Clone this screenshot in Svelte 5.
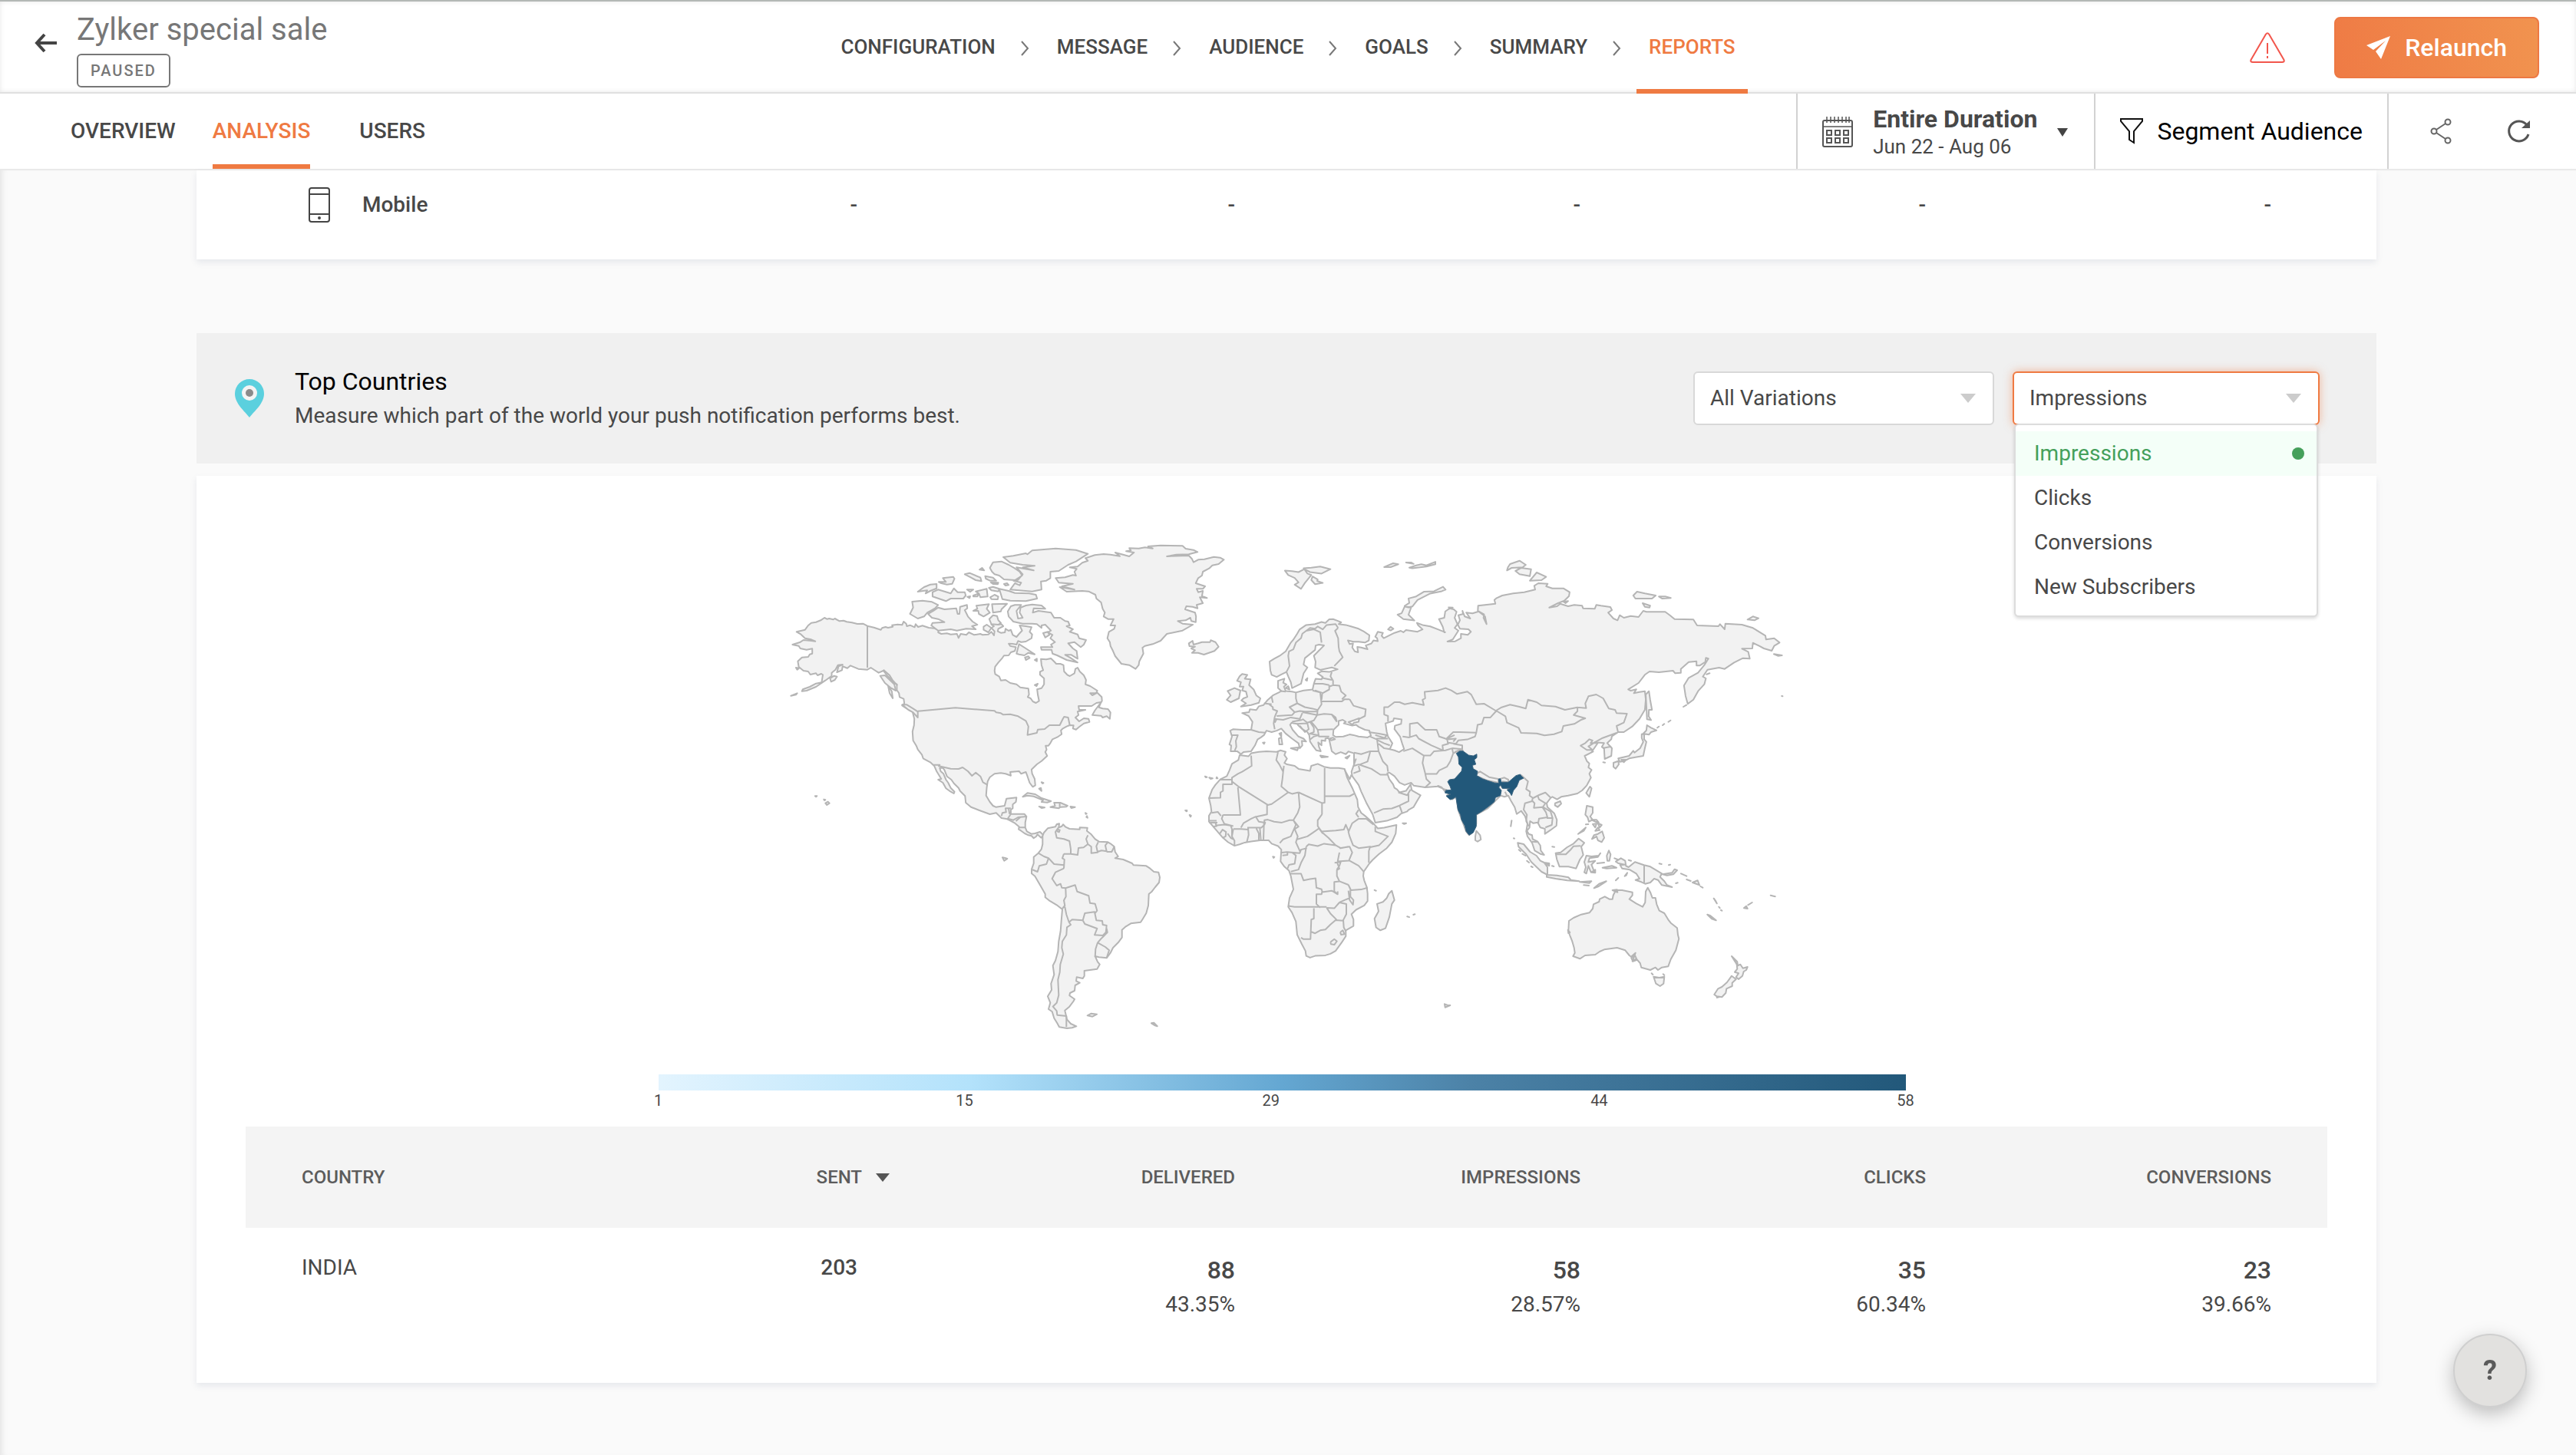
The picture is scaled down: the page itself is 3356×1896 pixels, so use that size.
<script lang="ts">
	type Tile = 'na' | 'eu' | 'as' | 'sa' | 'oc';
	type Part = [Tile, string];

	const steps = ['Configuration', 'Message', 'Audience', 'Goals', 'Summary', 'Reports'];
	const tabs = ['Overview', 'Analysis', 'Users'];
	const variations = ['All Variations'];
	const metrics = ['Impressions', 'Clicks', 'Conversions', 'New Subscribers'];
	const legend = [1, 15, 29, 44, 58];
	const platforms = [{ name: 'Mobile', values: ['-', '-', '-', '-', '-'] }];
	const countries = [
		{
			name: 'INDIA',
			sent: 203,
			stats: [
				{ count: 88, rate: '43.35%' },
				{ count: 58, rate: '28.57%' },
				{ count: 35, rate: '60.34%' },
				{ count: 23, rate: '39.66%' }
			]
		}
	];

	let variation = $state('All Variations');
	let metric = $state('Impressions');
	let menuOpen = $state(true);

	function choose(m: string) {
		metric = m;
		menuOpen = false;
	}

	// Shapes are stored per map tile: origin x, origin y, units per pixel in x and y
	const tiles: Record<Tile, number[]> = {
		na: [152, 70, 2.45, 3],
		eu: [682, 70, 3, 2.6133],
		as: [842, 70, 2.45, 3],
		sa: [422, 390, 3, 3],
		oc: [1002, 320, 3, 3]
	};

	function line(...parts: Part[]) {
		const out: string[] = [];
		for (const [tile, text] of parts) {
			const [ox, oy, sx, sy] = tiles[tile];
			for (const p of text.trim().split(/\s*,\s*/)) {
				const [x, y] = p.split(' ').map(Number);
				out.push(`${(ox + x / sx).toFixed(1)} ${(oy + y / sy).toFixed(1)}`);
			}
		}
		return 'M' + out.join('L');
	}
	const rings = (tile: Tile, list: string[]) => list.map((t) => line([tile, t]) + 'Z').join('');
	const lines = (tile: Tile, list: string[]) => list.map((t) => line([tile, t])).join('');

	const northAmerica = rings('na', [
		'157 345,165 350,172 348,185 352,190 348,205 358,218 356,228 361,245 364,262 369,280 368,294 377,315 383,337 392,341 385,352 381,360 384,375 380,373 374,390 371,405 373,410 360,418 368,420 378,430 374,445 382,448 370,456 381,470 376,490 384,508 386,522 392,520 402,530 408,548 406,560 410,580 408,585 424,592 408,610 412,618 402,635 412,655 408,662 412,680 410,690 400,698 414,700 398,690 385,698 378,690 372,706 366,712 372,722 370,728 378,712 388,710 398,720 404,733 402,735 388,745 396,752 392,758 412,770 420,778 408,788 395,780 375,800 378,818 382,812 400,820 410,818 425,800 438,785 440,775 436,770 450,758 447,745 446,750 455,768 460,765 475,752 480,745 492,730 493,725 502,712 520,702 536,700 552,702 565,715 575,720 590,735 588,750 600,770 605,782 617,808 622,810 645,806 655,815 660,822 672,832 678,842 670,838 645,836 625,850 620,858 605,858 582,845 568,845 556,855 550,850 530,848 506,865 508,880 504,890 516,897 525,910 525,920 530,922 555,932 568,940 573,955 562,958 545,965 540,972 555,985 570,992 588,990 605,1005 612,1028 630,1024 640,1005 640,1012 648,1028 638,1042 655,1043 670,1040 675,1025 678,1010 690,985 690,968 690,970 705,990 705,965 712,968 725,958 735,970 750,985 738,1000 740,1003 752,985 758,970 772,960 782,950 778,952 766,940 765,930 770,918 778,912 785,914 800,900 812,885 820,878 835,872 845,863 845,866 860,862 870,868 885,850 905,835 918,818 938,820 955,828 975,830 1000,822 1006,812 990,805 965,800 948,785 955,778 945,750 948,752 962,735 955,720 952,700 955,685 968,678 985,675 1010,673 1040,685 1065,695 1080,704 1085,720 1082,732 1080,738 1052,770 1048,768 1065,758 1075,758 1090,752 1095,752 1112,765 1112,795 1112,802 1122,798 1145,798 1165,803 1180,817 1190,829 1188,845 1182,856 1195,849 1205,837 1192,833 1200,825 1207,818 1198,808 1195,796 1188,785 1178,777 1172,778 1162,765 1148,750 1138,740 1132,722 1128,705 1108,685 1113,650 1097,625 1085,608 1068,606 1042,590 1022,585 1010,570 992,562 978,548 965,540 940,535 932,525 932,528 945,537 955,545 978,552 990,560 1010,572 1025,570 1032,560 1025,545 1012,535 990,520 978,530 975,515 945,508 925,495 910,472 895,468 880,455 860,450 845,440 825,438 790,443 765,444 740,438 712,420 700,405 688,412 680,410 662,397 655,395 640,388 628,388 605,378 600,365 580,358 572,345 552,330 560,320 552,305 540,294 548,265 545,240 532,230 542,215 535,213 550,197 558,202 535,215 528,200 530,192 548,180 560,180 572,160 590,130 615,100 630,85 632,88 625,110 615,130 602,148 598,152 568,147 564,135 570,130 562,112 567,105 555,90 552,75 537,72 515,85 500,105 498,110 488,118 485,118 466,100 470,80 465,75 455,55 450,80 440,90 432,115 435,128 437,115 430,95 425,82 410,68 400,95 392,105 375,115 365,130 362,145 355'
	]);

	const arctic = rings('na', [
		'895 190,925 187,950 178,960 180,955 165,962 154,940 148,965 145,980 130,998 122,990 112,1000 108,1020 100,1048 96,1070 98,1100 104,1085 90,1110 98,1130 105,1145 90,1120 85,1135 82,1130 73,1160 74,1180 70,1205 74,1190 66,1230 62,1300 64,1310 75,1335 80,1348 88,1320 97,1280 98,1250 105,1320 102,1330 115,1335 128,1350 118,1370 116,1400 107,1420 110,1432 118,1415 135,1395 140,1385 152,1365 165,1362 180,1350 190,1342 210,1355 215,1372 222,1365 232,1345 232,1350 245,1365 240,1362 260,1378 268,1355 265,1365 288,1345 295,1348 308,1332 302,1312 300,1308 312,1340 325,1343 340,1342 362,1328 358,1325 345,1310 355,1285 358,1300 368,1333 372,1300 395,1250 408,1230 435,1205 448,1180 455,1172 462,1175 485,1162 515,1160 530,1150 545,1130 530,1105 525,1085 495,1078 475,1070 455,1068 440,1060 425,1065 400,1082 388,1085 375,1070 375,1080 350,1062 350,1048 340,1052 325,1045 310,1040 285,1025 270,1022 255,1000 242,980 240,930 243,908 225,955 235,915 222,950 212,905 208',
		'728 108,760 103,800 93,805 97,820 82,895 74,960 80,998 95,960 125,935 138,905 162,878 165,878 190,865 200,848 203,850 235,820 242,750 235,765 210,780 218,785 208,760 200,775 197,790 175,770 148,825 160,790 148,828 142,790 138,750 130',
		'685 150,695 128,722 125,745 138,765 152,780 165,788 180,765 198,730 195,715 180,700 175,692 165',
		'715 232,745 240,765 248,810 250,832 255,836 270,800 280,750 278,725 272',
		'745 340,742 320,752 300,765 295,785 295,770 318,775 348,790 345,780 325,783 305,800 297,820 293,850 297,862 310,825 308,822 325,840 318,880 325,890 345,910 345,925 358,935 360,940 375,930 378,950 390,940 400,965 410,970 425,992 432,985 450,975 460,955 440,935 445,950 465,962 475,965 505,945 490,925 490,940 500,965 520,930 510,900 492,885 485,882 470,850 470,848 460,885 460,880 450,893 440,878 425,885 412,870 402,880 395,862 372,850 375,850 385,835 370,820 368,790 368,760 360',
		'488 330,505 318,520 305,540 312,578 308,582 330,588 330,590 302,612 295,613 308,605 315,615 340,630 360,645 372,628 378,640 390,610 388,580 395,560 390,520 395,498 375,502 365,540 362,520 350,500 345',
		'437 282,470 278,500 283,520 295,510 308,485 325,475 340,455 348,430 330,440 305',
		'632 318,645 310,642 298,682 292,675 310,685 325,665 340,650 330,648 318',
		'692 292,740 290,722 312,720 320,695 325',
		'695 335,708 338,712 355,720 365,712 372,690 370,683 350',
		'502 245,520 235,560 250,570 230,582 245,605 245,608 258,600 270,560 270,545 280,502 262',
		'632 258,650 250,640 242,675 232,678 262,655 265,650 250,645 262,632 262',
		'682 228,695 224,715 232,712 242,690 238',
		'686 265,700 255,712 262,710 273,690 272',
		'455 243,475 225,495 215,515 213,515 230,495 240,480 250,485 238',
		'522 205,545 205,535 190,568 185,572 192,565 212,548 215,530 210',
		'605 175,620 170,655 188,658 202,640 198,625 188',
		'670 182,695 188,705 200,685 200,672 192',
		'688 207,712 208,710 214,695 213',
		'652 157,660 150,667 160',
		'730 213,740 210,745 217,735 219',
		'612 235,632 235,622 244',
		'613 263,622 261,620 268',
		'665 380,675 372,690 385,680 402,665 392',
		'778 448,800 465,828 488,808 482,795 492,778 488,770 485',
		'855 405,870 400,875 412,862 422',
		'797 500,808 496,812 502,800 510',
		'828 510,835 505,835 515',
		'828 608,838 603,834 612'
	]) + rings('na', [
		'1040 675,1033 695,1045 700,1062 702,1070 715,1068 740,1058 730,1045 735,1040 728,1012 725,1020 708',
		'1320 445,1332 435,1335 450,1350 445,1362 440,1388 440,1390 433,1405 440,1415 458,1402 475,1368 489,1350 482,1330 482,1340 472,1328 465,1340 458,1322 456',
		'790 1045,805 1030,830 1035,850 1050,880 1062,868 1067,850 1065,855 1058,825 1043,805 1040',
		'878 1085,893 1080,890 1068,910 1068,933 1080,928 1084,910 1085,905 1090',
		'842 1083,860 1087,850 1089', '942 1083,957 1085,945 1089',
		'160 1070,168 1064,173 1070,165 1077', '127 1042,133 1042,130 1045', '155 1055,160 1057,157 1059',
		'405 685,420 685,440 700,455 712,455 735,440 715,425 705',
		'175 582,188 572,197 575,190 588,178 595', '50 650,70 640,66 646',
		'360 610,372 632,375 660,365 640', '335 572,350 570,380 605,385 630,370 620,350 600',
		'66 540,76 542,70 548', '850 988,856 991,853 993', '842 1013,848 1010,850 1022', '990 1108,994 1111,991 1112', '995 1120,997 1127,993 1124',
		'1372 965,1378 968,1374 969', '1385 970,1396 973,1390 975', '1409 968,1412 973,1408 973', '1310 1098,1314 1101', '1324 1117,1326 1121'
	]);

	const southAmerica = rings('sa', [
		'235 238,240 225,255 208,270 205,285 202,290 192,300 190,298 205,310 200,315 193,325 203,340 210,380 212,380 205,410 206,408 218,425 232,440 250,455 260,490 262,500 268,515 280,518 300,530 318,518 325,550 330,585 345,590 352,640 355,655 365,670 378,688 380,693 400,690 420,675 438,662 455,650 465,648 510,640 540,625 565,618 575,580 580,560 592,545 605,545 635,530 655,510 675,500 695,485 715,455 712,440 708,450 730,458 740,448 758,398 765,398 785,392 795,368 790,366 805,380 812,362 822,360 843,342 852,340 862,360 876,355 885,340 905,322 920,330 955,345 972,367 982,350 988,330 990,300 985,292 970,280 950,272 925,258 915,265 890,255 865,270 840,268 815,280 780,275 745,285 725,295 690,298 650,305 610,308 570,312 525,290 508,260 490,245 478,245 465,225 430,205 395,192 385,192 368,200 345,200 320,218 305,230 290,235 270'
	]) + rings('sa', ['410 940,425 932,447 935,430 944', '660 970,670 968,683 982,672 978', '78 322,88 324,97 327,85 335', '793 138,799 138,797 142', '809 156,815 159,813 163', '293 212,302 215,299 223,292 220', '1135 319,1141 320,1138 324']);

	const eurasia = line(
		['eu', '350 495,345 480,342 450,360 440,385 428,405 415,425 385,435 375,450 355,460 340,485 325,520 322,545 315,560 318,575 306,590 305,605 310,622 316,612 322,640 325,660 330,690 338,712 348,732 360,730 378,715 385,690 382,670 382,648 378,655 390,668 388,665 402,675 415,688 418,685 400,700 402,725 408,718 395,740 388,748 378,765 380,762 370,755 365,765 348,785 352,780 362,788 370,800 365,830 352,855 345,865 350,875 342,920 348,940 340,922 325,918 318,940 325,970 330,1000 340,1028 350'],
		['as', '445 402,440 380,428 350,445 345,448 320,462 308,475 312,484 322,478 345,487 370,478 385,490 395,472 430,455 438,480 437,498 425,498 408,520 412,530 400,522 390,495 388,488 372,495 355,490 335,505 330,503 318,510 340,528 348,515 325,535 328,555 320,572 332,570 345,580 370,575 340,552 318,553 298,608 290,605 275,612 268,630 258,665 250,700 245,735 235,732 220,745 210,775 212,770 222,790 230,825 230,845 245,843 260,828 278,808 288,780 305,805 300,815 290,840 300,860 295,885 298,888 308,925 310,930 295,945 298,975 303,980 315,968 325,985 348,998 355,1005 335,1018 345,1040 338,1065 342,1080 318,1090 322,1150 322,1165 335,1180 350,1240 352,1252 375,1320 378,1325 370,1340 390,1342 368,1395 372,1430 385,1470 415,1472 430,1498 425,1515 442,1498 455,1490 474,1465 465,1450 455,1430 443,1428 465,1395 466,1415 478,1420 505,1398 503,1370 520,1340 545,1322 540,1285 548,1270 575,1280 582,1275 605,1255 632,1240 665,1222 682,1215 650,1210 610,1225 580,1255 560,1275 530,1288 505,1280 502,1278 518,1260 532,1250 532,1250 515,1225 518,1200 545,1200 560,1182 562,1175 552,1130 558,1100 555,1085 568,1065 600,1032 625,1040 630,1058 625,1050 640,1068 635,1085 632,1088 665,1085 705,1068 740,1045 770,1018 792,1000 792,980 808,978 820,965 835,980 855,978 885,957 897,955 855,948 850,955 835,925 832,905 848,918 862,900 862,880 845,895 835,908 820,918 825,912 835,935 835,915 870,920 868,893 885,900 905,908 915,905 930,915 940,908 955,913 970,900 1000,885 1020,870 1032,840 1040,818 1045,805 1055,790 1045'],
		['oc', '480 300,465 320,468 335,495 360,505 385,503 408,480 425,458 440,458 420,440 415,430 395,412 398,400 390,398 415,388 428,395 440,408 445,410 460,430 470,440 485,442 505,455 522,440 518,418 505,408 475,390 450,385 430,390 400,380 370,365 350,348 362,340 335,325 310,315 290,300 295,285 290,265 310,235 340,190 365,190 400,175 435,162 445,150 430,135 390,120 350,112 295,95 305,75 290,90 280,68 275,55 258,40 252'],
		['eu', '1000 875,950 878,905 872,895 862,870 870,850 862,830 840,810 828,802 830,810 850,825 868,830 880,840 885,850 895,875 890,893 868,898 888,932 905,918 925,905 945,885 955,880 960,855 968,840 980,800 992,755 998,745 970,720 930,700 892,690 870,665 840,662 825,672 800,672 762,650 756,640 765,620 758,600 765,585 755,580 735,575 715,570 710,560 712,560 720,545 718,545 735,532 725,535 740,542 755,525 752,510 735,500 722,497 700,490 690,470 680,455 668,450 662,435 660,428 658,422 665,432 682,455 705,475 712,485 722,468 720,470 735,460 745,455 728,430 712,405 695,388 678,370 685,350 690,330 685,320 700,308 708,295 715,285 735,270 755,240 758,230 765,215 755,190 755,192 735,185 732,195 705,188 685,200 680,235 682,270 682,275 655,260 635,235 625,262 622,265 612,290 615,300 602,318 598,335 580,355 565,378 555,388 550,375 540,375 515,400 508,395 522,408 528,398 535,405 550,430 552,445 555,475 548,510 545,515 525,522 508,545 510,550 502,530 490,545 483,575 485,608 476,585 470,540 478,520 470,522 450,515 430,535 412,555 395,535 392,522 395,520 410,480 438,475 460,490 470,475 490,465 525,430 540,425 520,415 500,408 485,385 495,370 502']
	) + 'Z';

	const africa = rings('eu', [
		'225 768,260 772,270 762,300 757,330 755,370 757,385 752,405 757,400 768,410 780,400 795,410 800,440 805,455 815,500 822,505 805,530 798,555 808,580 812,612 812,635 815,645 845,665 880,675 900,685 920,688 945,700 965,715 975,745 998,752 1005,765 1018,790 1015,838 1006,835 1035,820 1065,800 1085,770 1105,745 1125,730 1140,710 1165,708 1180,712 1195,722 1218,725 1240,725 1265,712 1280,680 1295,662 1310,670 1328,670 1350,640 1365,640 1385,625 1405,600 1435,580 1445,560 1450,520 1452,500 1458,485 1452,482 1435,468 1412,450 1380,445 1335,430 1305,415 1285,420 1255,435 1225,425 1180,418 1162,400 1148,385 1130,388 1090,375 1078,350 1070,338 1058,305 1058,270 1062,245 1066,225 1072,205 1077,180 1065,160 1050,145 1035,125 1015,105 995,105 975,115 960,112 940,105 915,118 885,130 870,150 850,175 840,185 820,195 798,220 785',
		'820 1230,830 1262,820 1275,810 1320,795 1358,775 1365,758 1355,752 1325,768 1300,762 1275,785 1268,800 1255,808 1240'
	]);

	const islands =
		rings('eu', [
			'215 515,225 500,235 492,255 495,245 508,268 510,262 530,280 545,290 565,306 575,300 590,270 598,230 603,250 592,232 582,240 575,255 570,250 552,235 548,240 535,225 535,230 520',
			'178 550,205 540,228 548,222 575,190 588,175 580,190 565',
			'402 140,430 142,455 145,478 135,490 150,505 155,480 182,465 202,440 188,455 180,440 165,415 155',
			'475 132,505 130,540 126,580 135,545 150,500 145,485 138', '510 160,530 170,528 175,550 182,520 186,505 172',
			'870 260,888 250,885 235,915 228,945 212,985 210,1020 195,1030 205,1015 210,970 218,920 240,900 262,885 265,870 262',
			'870 262,895 266,885 290,908 310,865 305,842 290,858 285',
			'790 128,825 115,845 118,815 128', '875 112,895 112,905 117', '888 130,915 122,935 118,955 122,990 110,990 118,955 126,900 132',
			'425 745,455 742,450 752', '378 712,388 708,392 732,380 732', '380 695,388 692,388 705', '540 770,570 774,545 776', '638 777,655 770,645 780', '805 340,815 331,826 338,815 344',
			'405 540,415 533,420 545', '483 512,490 506,488 515', '316 726,323 725,320 730', '862 1000,876 1000,868 1003', '880 1318,888 1320', '904 1312,910 1310', '752 1228,758 1230', '1042 265,1058 266,1045 270'
		]) +
		rings('as', [
			'648 148,655 135,685 122,705 138,695 148,660 150,645 160', '672 162,690 150,722 155,718 182,685 175', '718 200,740 168,770 185,755 198',
			'1048 258,1060 243,1085 250,1120 258,1108 270,1055 270', '1130 262,1150 262,1168 268,1140 270', '1078 288,1102 298,1100 305,1085 302', '1413 352,1430 340,1448 347,1435 355', '825 282,840 280,832 288',
			'1098 632,1102 665,1108 705,1098 705,1097 730,1105 745,1092 742,1090 690,1088 645',
			'1092 765,1105 775,1122 785,1105 792,1098 802,1080 798,1090 785',
			'1075 800,1083 798,1083 820,1090 830,1085 855,1080 885,1055 890,1035 895,1020 905,1005 908,1000 895,1035 885,1048 865,1052 872,1070 855,1080 830,1075 815', '985 912,1000 905,1002 918,992 935,985 928', '1010 900,1025 900,1018 910',
			'910 1005,915 1012,908 1045,898 1030', '1125 775,1130 770', '1142 765,1147 760', '1160 752,1167 746', '1208 693,1218 686', '1282 566,1292 562', '1497 487,1523 492,1510 494', '952 910,958 911', '1522 651,1525 652', '657 1160,660 1138'
		]) +
		rings('oc', [
			'190 428,205 445,208 462,195 470,186 465,186 450', '498 320,518 312,522 322,508 335,497 328',
			'352 475,375 480,400 510,425 525,440 545,455 552,468 570,468 600,445 588,405 550,385 520,355 490', '465 600,505 602,550 610,560 620,592 625,545 622,500 615,465 608',
			'500 515,520 512,545 492,570 478,590 458,612 475,600 490,608 522,595 540,580 575,550 568,515 568,505 540',
			'612 550,620 525,640 528,668 525,675 515,665 530,632 535,628 550,655 545,640 560,652 590,638 590,628 565,620 595,612 590,618 570',
			'622 330,645 335,645 358,635 372,645 385,630 392,625 375,616 365', '642 460,650 445,665 440,682 430,690 455,680 472,665 465,660 450', '640 385,660 385,668 395,655 392', '645 402,660 400,655 415', '665 398,680 405,672 415', '655 428,665 415,672 425', '588 440,618 415,610 428', '618 403,628 402',
			'735 548,755 535,772 545,775 565,785 570,810 550,845 562,870 568,890 580,915 595,908 608,925 625,935 640,955 648,915 640,900 620,885 615,870 630,850 635,835 628,812 620,828 615,815 595,790 580,760 575,752 562,770 560,745 555',
			'918 598,955 592,965 578,975 582,960 598,935 602', '990 595,1012 605', '1012 618,1028 624', '1035 630,1055 622,1062 640', '1066 645,1075 650', '905 556,914 558', '942 562,948 560', '970 633,977 631',
			'700 525,708 505,715 520,710 545,702 545', '683 572,720 565,738 572,700 575', '662 555,690 552', '595 628,640 625,632 632', '650 652,670 635,698 625,668 645', '610 640,630 642', '735 622,745 612', '770 605,780 592,776 602', '785 542,795 545', '455 552,475 555,475 565', '486 565,493 567', '487 490,495 491',
			'356 502,363 508', '370 518,382 525', '388 545,396 552', '404 567,410 570', '640 590,655 580,655 592', '730 535,742 540',
			'860 650,870 668,878 690,890 690,895 715,905 740,925 750,940 775,950 788,975 808,978 835,982 850,970 895,950 930,940 958,915 962,900 972,890 962,870 972,835 962,830 945,815 928,800 938,812 905,795 920,788 915,772 895,740 885,690 892,672 900,655 912,615 915,595 928,568 918,575 905,572 885,565 860,555 835,550 820,552 780,570 768,600 755,632 748,645 732,648 715,670 705,672 695,692 685,710 695,722 695,725 680,735 660,760 660,800 668,800 680,788 695,815 712,840 725,850 708,852 665',
			'883 998,905 1002,925 998,922 1025,908 1035,892 1025', '875 985,880 990', '920 988,925 992',
			'1188 918,1198 928,1210 940,1212 955,1222 950,1232 965,1250 960,1245 972,1235 978,1230 995,1215 1008,1205 1000,1215 985,1200 980,1210 968,1208 950', '1188 995,1205 1008,1190 1022,1190 1035,1168 1045,1165 1062,1150 1078,1130 1075,1120 1068,1135 1045,1150 1038,1170 1020', '1130 1080,1138 1078',
			'1093 755,1105 760,1127 778,1110 772', '1118 692,1124 700,1130 712', '1138 725,1142 730', '1146 738,1150 740', '1236 730,1245 722,1250 732', '1252 718,1268 708', '1340 680,1358 685', '66 1105,78 1110,88 1110,68 1118', '722 660,740 658,742 668', '796 925,810 915,818 932,802 938', '548 815,556 825,550 828', '336 457,339 458', '325 410,328 388'
		]);

	const seas = rings('eu', [
		'590 700,592 682,612 665,612 652,628 648,640 655,632 660,665 668,680 665,690 672,715 682,732 685,738 702,725 708,690 705,670 700,655 698,630 705,600 706',
		'650 656,670 650,692 643,690 655,672 658,665 664',
		'795 660,825 652,828 643,858 647,856 662,832 668,830 680,852 705,860 728,868 748,848 758,830 752,812 748,822 728,805 705,800 690',
		'577 712,590 709,598 714,582 718'
	]);

	const borders =
		lines('na', [
			'294 377,294 540', '345 548,365 570,375 590,390 610', '455 710,575 697,700 709,705 715,720 718,728 724,750 722,775 730,800 748,808 770,805 803,835 795,838 782,860 780,875 765,908 765,918 740,922 732,935 735,940 765',
			'505 920,525 920,522 925,560 935,585 936,598 930,615 945,628 963,640 950,655 965,663 988,677 998', '722 1120,725 1108,737 1105,735 1090,752 1090', '752 1112,742 1130,760 1136,775 1125,802 1122', '768 1140,782 1125', '778 1165,798 1165', '908 1068,908 1085', '745 1092,748 1112'
		]) +
		lines('sa', [
			'297 205,285 222,290 245,318 250,340 258,345 290,345 308', '318 308,345 308,372 312,375 285,395 283,412 270,405 250,412 235', '412 270,425 280,425 305,450 302,445 278,452 262', '450 300,465 295,485 298,480 275,490 262', '485 300,505 300,515 280', '318 308,312 325,320 330,318 365', '218 305,240 318,258 325,280 348,318 352', '258 325,250 348,222 355,215 378,195 370', '318 365,285 380,272 405,290 432,305 425,310 440,325 442,362 430,370 455,415 472,420 500,440 503,448 530,440 540',
			'325 442,326 475,318 490,322 510,312 522', '322 515,328 545,338 575,345 585,330 595,328 625,312 650,310 675,316 700,304 740,302 770,295 800,298 860,290 890,275 905,290 922,292 938,328 942,328 985', '338 575,350 565,392 568', '392 568,400 540,438 535,445 568,468 570,470 585,485 588,482 615,470 627,438 625,448 600,400 582,392 568', '485 600,488 615,465 638,450 655', '450 655,480 672,495 685,485 715', '450 655,442 680,440 710'
		]) +
		lines('eu', [
			'270 770,272 805,235 825,218 832,195 845,195 860', '105 915,150 913,150 895,160 890,160 868,195 868,195 852,148 852', '195 858,220 875,335 938,350 935,415 895', '218 878,228 972,160 972', '160 972,155 985,165 1002,200 1010', '415 895,430 900,455 895', '395 825,392 850,388 875,415 895', '375 758,368 785,380 800,395 825,398 805', '455 895,548 932', '557 812,557 930,547 932,547 970', '557 908,655 908,672 900', '455 895,460 945,452 965,435 990', '332 938,332 970,290 978',
			'230 1015,240 1000,270 985,288 978,300 995,325 998,322 1005,310 1015,255 1015', '322 1005,322 990,335 988,360 995,390 998,420 990,435 990,445 1005', '320 1000,318 1058', '290 1018,300 1035,300 1060', '304 1015,308 1058', '258 1015,260 1040,253 1065', '200 1020,195 1045,205 1060,205 1077', '200 1020,230 1020,258 1022', '130 1008,165 1005,190 1008,195 1020,195 1045', '115 965,140 962,152 975', '108 992,135 992', '106 998,138 998', '148 1035,158 1022,172 1030,170 1045,158 1050', '178 1035,190 1050,200 1055', '130 998,135 1010,120 1012',
			'445 1005,425 1045,395 1055,382 1068', '435 990,455 1012,440 1020,452 1045,445 1065,455 1085,462 1098', '450 1055,490 1045,512 1032,535 1018,550 1035', '547 970,530 990,530 1010,545 1028', '545 1028,600 1025,632 1022,640 1005,652 1030', '485 1080,495 1072,530 1078,555 1070,600 1075', '545 1030,572 1050,600 1075,620 1085,650 1080', '655 1045,650 1030,665 1000,690 985,720 985,748 1005', '690 980,680 968,690 955', '755 1012,755 1028,805 1045,770 1075,735 1082', '655 1045,668 1075,690 1085,735 1080,730 1095,730 1135', '615 1085,655 1080,665 1100,652 1128,608 1130,615 1100', '655 1128,690 1145,710 1165',
			'390 1100,410 1098,460 1102,465 1090,488 1085', '485 1080,480 1110,465 1135,455 1158,425 1165', '392 1110,412 1108,412 1100', '430 1100,445 1110,440 1138,418 1142,412 1155', '420 1172,465 1172,475 1195,500 1190,522 1188,525 1220,545 1225,548 1235,585 1230,608 1242,608 1232', '605 1132,615 1155,605 1160,605 1180,615 1198', '596 1135,620 1132,615 1145,605 1158', '608 1242,595 1232,595 1200,615 1198,650 1210', '650 1210,660 1228,700 1226,725 1220', '548 1230,545 1242,525 1242,525 1275,540 1288', '415 1282,440 1285,510 1285,565 1285',
			'515 1290,515 1325,505 1328,502 1395,475 1395,465 1390', '505 1370,520 1375,540 1365,560 1362,580 1345,600 1330,630 1332', '565 1288,580 1308,605 1330', '565 1288,595 1290,615 1270,642 1275,642 1310,630 1330,632 1355,640 1368', '650 1210,658 1225,658 1250,670 1262,668 1278,655 1262,650 1230', '615 1270,635 1262,655 1255', '580 1405,595 1395,605 1402,595 1414,582 1412,580 1405', '618 1372,628 1365,635 1378,622 1380,618 1372',
			'408 485,420 465,415 430,418 415,435 408,445 385,465 370,470 355,485 345', '485 345,515 340,540 350,545 385', '485 345,500 335,520 338,530 330,550 340,565 325,600 322,610 335', '610 335,598 345,610 370,612 400,615 415,628 435,595 465', '585 485,580 500,590 515,590 530', '515 525,550 525,575 530', '545 505,585 512', '575 530,575 545,550 557,520 548', '590 530,575 535', '548 557,545 580', '445 555,445 575,450 592,480 605,510 610,530 615,545 595,540 555,510 548', '590 530,615 532,622 552,640 565,625 578',
			'545 585,590 585,625 585,635 578,655 578', '655 578,670 600,718 612,715 635,692 645', '340 595,355 605,355 612,372 618,362 638', '450 592,420 605,440 622,430 632,370 635', '360 645,395 648,425 640,460 645,470 625', '440 622,460 618,480 620,528 620', '470 645,490 658,515 650,528 632,470 622', '528 632,555 628,585 630,605 655', '530 612,528 632', '505 655,520 670,530 682,590 680', '530 682,535 705,575 705', '500 655,515 675,515 690,500 695,530 700', '450 662,490 660,495 680,480 690,460 668', '430 655,470 648', '362 658,370 645', '362 638,358 660,362 680', '270 682,300 690,325 692', '192 700,218 700,210 720,212 740,205 755', '500 715,515 705,535 700', '585 630,600 640,605 655', '320 592,350 595', '350 570,355 590', '385 550,405 552',
			'672 760,700 765,735 755,768 755', '768 755,762 715,735 705', '735 758,725 790,690 802', '672 805,690 800,740 815,775 835,802 835', '768 755,785 790,802 805,805 825', '670 830,695 822,690 805', '750 965,785 952,820 950,850 940,860 965', '885 900,885 925,850 940', '845 895,880 905,893 885', '680 780,672 800', '635 818,655 850,662 835',
			'768 730,790 745,812 748', '865 755,900 745,945 770', '945 770,940 795,950 830,955 850,970 862,950 878', '950 832,995 832,1005 820,1035 808,1048 790,1060 762,1055 745', '945 770,970 770,985 755,1030 752,1055 745', '862 705,888 708,915 700,925 712,975 735,1020 752', '890 705,890 662,920 658,950 682,995 682,1005 705,1030 712', '1030 715,1060 690,1085 690,1150 692,1145 705,1115 715,1080 718,1070 730,1035 725', '1020 752,1018 735,1040 730,1035 712,1065 700', '1055 745,1095 748,1100 765', '1060 730,1095 735,1095 748', '1035 715,1070 712,1060 722',
			'805 655,805 635,790 630,790 605,805 605,830 588,850 588,870 595,900 590,945 598,940 580,950 575,948 553,1000 548,1030 540,1052 548,1075 560,1115 552,1130 562,1150 595,1180 593,1228 618', '1228 618,1205 640,1180 640,1172 662,1155 665,1150 692', '730 690,770 695,800 700,792 710,755 700', '760 712,805 712', '765 718,790 728,812 735', '1000 875,1040 890,1030 885', '1060 762,1095 748'
		]) +
		lines('as', [
			'610 708,628 695,655 685,682 692,705 700,712 665,740 675,755 688,800 692,830 705,870 695,870 710,858 725,895 738,880 745,860 760,825 768,820 790,795 800,765 805,740 797,690 795,682 775,645 755,640 730,610 708', '870 695,898 698,895 680,905 652,930 645,952 660,970 700,990 705,995 718,1028 720,1018 755,995 768,1000 795', '925 832,950 815,995 795', '950 855,978 848'
		]) +
		lines('oc', [
			'190 205,205 196,240 218,275 225,278 240,235 232,195 215', '283 225,300 220,315 228,315 238,290 235', '285 248,292 260,318 262', '302 275,310 290', '365 210,392 235,385 265,400 275,398 290,412 300', '412 300,435 288,460 278,480 298', '410 300,408 312,380 320,375 345,388 365,385 390,395 410', '408 310,418 320,415 338,448 335,462 355,468 375,435 380,432 398', '430 290,435 305,460 320,450 335,480 352,488 378,465 378', '488 378,485 405,460 415', '408 470,428 472', '500 520,540 520,560 500,570 488,598 487', '846 562,846 632', '105 120,130 110,140 118'
		]);

	const india = rings('oc', [
		'112 125,125 116,138 116,160 132,178 135,192 128,192 142,182 150,188 168,175 172,178 185,195 195,192 212,215 225,235 232,260 240,278 242,277 225,284 224,288 238,315 238,345 212,362 207,365 213,375 222,358 230,348 255,335 270,328 290,322 280,310 268,322 262,292 262,285 248,278 258,288 270,284 290,265 298,260 315,235 335,212 352,190 365,190 410,178 435,162 445,150 430,145 408,132 385,128 365,118 345,110 295,100 302,88 306,72 292,90 285,68 280,70 270,92 268,88 255,78 236,85 228,105 225,132 195,135 180,122 168,120 140'
	]);
</script>

<header class="topbar">
	<div class="campaign">
		<a class="back" href="#campaigns" aria-label="Back">
			<svg width="30" height="26" viewBox="0 0 30 26"><path d="M13 2L3 13l10 11M3 13h26" fill="none" stroke="#444" stroke-width="4" /></svg>
		</a>
		<div>
			<h1>Zylker special sale</h1>
			<span class="badge">PAUSED</span>
		</div>
	</div>

	<nav class="steps">
		{#each steps as step, i}
			{#if i > 0}
				<svg class="chevron" width="12" height="20" viewBox="0 0 12 20"><path d="M2 1l8 9-8 9" fill="none" stroke="#777" stroke-width="2" /></svg>
			{/if}
			<a href="#{step}" class:active={step === 'Reports'}>{step}</a>
		{/each}
	</nav>

	<div class="launch">
		<svg width="46" height="40" viewBox="0 0 46 40" fill="none" stroke="#f2564c" stroke-width="2">
			<path d="M21 2.500Q23 0 25 2.500L44.500 36Q45.500 39 42 39H4Q.5 39 1.500 36Z" stroke-linejoin="round" />
			<path d="M23 14v14M23 31v3" />
		</svg>
		<button class="relaunch">
			<svg width="32" height="32" viewBox="0 0 32 32"><path d="M31 1L0 13l9 6L25 7 12 21l7 10z" fill="#fff" /></svg>
			Relaunch
		</button>
	</div>
</header>

<div class="subbar">
	<nav class="tabs">
		{#each tabs as tab}
			<a href="#{tab}" class:active={tab === 'Analysis'}>{tab}</a>
		{/each}
	</nav>

	<div class="tools">
		<button class="duration">
			<svg width="40" height="40" viewBox="0 0 40 40" fill="none" stroke="#555" stroke-width="2">
				<rect x="1" y="5" width="38" height="34" rx="2" />
				<path d="M1 13h38M6 0v8M11 0v8M16 0v8M21 0v8M26 0v8M31 0v8M35 0v8" stroke-width="1.500" />
				{#each [18, 28] as y}
					{#each [6, 17, 28] as x}
						<rect {x} {y} width="6" height="6" />
					{/each}
				{/each}
			</svg>
			<span>
				<strong>Entire Duration</strong>
				<small>Jun 22 - Aug 06</small>
			</span>
			<svg width="14" height="11" viewBox="0 0 14 11"><path d="M0 0h14L7 11z" fill="#444" /></svg>
		</button>
		<button class="segment">
			<svg width="30" height="34" viewBox="0 0 30 34"><path d="M1 1h28v3L18 17v15l-6-4V17L1 4z" fill="none" stroke="#111" stroke-width="2" /></svg>
			Segment Audience
		</button>
		<div class="actions">
			<button aria-label="Share">
				<svg width="28" height="34" viewBox="0 0 28 34" fill="none" stroke="#666" stroke-width="2">
					<circle cx="5" cy="17" r="3.500" /><circle cx="23" cy="5" r="3.500" /><circle cx="23" cy="29" r="3.500" />
					<path d="M8 15L20 7M8 19l12 8" />
				</svg>
			</button>
			<button aria-label="Refresh">
				<svg width="32" height="32" viewBox="0 0 32 32">
					<path d="M28 20A13 13 0 1 1 26 8" fill="none" stroke="#555" stroke-width="3" />
					<path d="M30 2v10H19z" fill="#555" />
				</svg>
			</button>
		</div>
	</div>
</div>

<main>
	<section class="card platforms">
		<table>
			<tbody>
				{#each platforms as p}
					<tr>
						<th scope="row">
							<span class="platform">
								<svg width="28" height="46" viewBox="0 0 28 46" fill="none" stroke="#444" stroke-width="2">
									<rect x="1" y="1" width="26" height="44" rx="3" />
									<path d="M1 9h26M1 35h26" />
									<circle cx="14" cy="40" r="1" />
								</svg>
								{p.name}
							</span>
						</th>
						{#each p.values as v, i}
							<td class="num" class:sent={i === 0}>{v}</td>
						{/each}
					</tr>
				{/each}
			</tbody>
		</table>
	</section>

	<section class="section-head">
		<svg width="38" height="50" viewBox="0 0 38 50">
			<path d="M19 0A19 19 0 0 0 0 19C0 32 13 42 19 50 25 42 38 32 38 19A19 19 0 0 0 19 0Z" fill="#5bd0de" />
			<circle cx="19" cy="18" r="10" fill="#f4f4f4" /><circle cx="19" cy="18" r="5" fill="#8a8a8a" />
		</svg>
		<div class="heading">
			<h2>Top Countries</h2>
			<p>Measure which part of the world your push notification performs best.</p>
		</div>
		<div class="select">
			<select aria-label="Variation" bind:value={variation}>
				{#each variations as v}<option>{v}</option>{/each}
			</select>
			<svg class="caret" width="20" height="12" viewBox="0 0 20 12"><path d="M0 0h20L10 12z" fill="#ccc" /></svg>
		</div>
		<div class="select" class:open={menuOpen}>
			<select aria-label="Metric" bind:value={metric}>
				{#each metrics as m}<option>{m}</option>{/each}
			</select>
			<svg class="caret" width="20" height="12" viewBox="0 0 20 12"><path d="M0 0h20L10 12z" fill="#ccc" /></svg>
			{#if menuOpen}
				<div class="menu">
					{#each metrics as m}
						<button class:selected={m === metric} onclick={() => choose(m)}>{m}</button>
					{/each}
				</div>
			{/if}
		</div>
	</section>

	<section class="card countries">
		<div class="chart">
			<svg class="map" viewBox="0 0 1625 780" role="img" aria-label="World map">
				<path d={eurasia} />
				<path d={africa} />
				<path d={northAmerica} />
				<path d={southAmerica} />
				<path d={arctic} />
				<path d={islands} />
				<path class="sea" d={seas} />
				<path class="border" d={borders} />
				<path class="hit" d={india} />
			</svg>
			<div class="scale"></div>
			<div class="ticks">
				{#each legend as n}
					<span style="left: {((n - 1) / 57) * 100}%">{n}</span>
				{/each}
			</div>
		</div>

		<table>
			<thead>
				<tr>
					<th scope="col">Country</th>
					<th scope="col" class="num">
						<button class="sort">
							Sent
							<svg width="18" height="11" viewBox="0 0 18 11"><path d="M0 0h18L9 11z" fill="#555" /></svg>
						</button>
					</th>
					<th scope="col" class="num">Delivered</th>
					<th scope="col" class="num">Impressions</th>
					<th scope="col" class="num">Clicks</th>
					<th scope="col" class="num">Conversions</th>
				</tr>
			</thead>
			<tbody>
				{#each countries as c}
					<tr>
						<td>{c.name}</td>
						<td class="num sent">{c.sent}</td>
						{#each c.stats as s}
							<td class="num"><b>{s.count}</b><span>{s.rate}</span></td>
						{/each}
					</tr>
				{/each}
			</tbody>
		</table>
	</section>
</main>

<button class="help" aria-label="Help">?</button>

<style>
	:global(body) {
		background: #fafafa;
		color: #484848;
		font-family: Roboto, 'Liberation Sans', sans-serif;
		font-size: 28px;
		line-height: 40px;
	}

	a {
		color: inherit;
		text-decoration: none;
	}

	svg {
		display: block;
		flex: none;
	}

	button {
		background: none;
		border: none;
		padding: 0;
		color: inherit;
		font: inherit;
		cursor: pointer;
	}

	.topbar {
		display: grid;
		grid-template-columns: 1fr auto 1fr;
		box-sizing: border-box;
		height: 122px;
		background: #fff;
		border-top: 2px solid #b4b8b6;
		border-bottom: 2px solid #e0e0e0;
		box-shadow: inset 0 0 6px rgba(0, 0, 0, 0.1);
	}

	.campaign {
		display: flex;
		padding-left: 45px;
	}

	.back {
		margin-right: 25px;
		padding-top: 41px;
	}

	h1 {
		margin: 13px 0 7px;
		color: #777;
		font-size: 40px;
		font-weight: 400;
		line-height: 48px;
	}

	.badge {
		display: inline-block;
		box-sizing: border-box;
		height: 44px;
		padding: 0 16px;
		border: 2px solid #777;
		border-radius: 6px;
		color: #777;
		font-size: 20px;
		font-weight: 500;
		letter-spacing: 2px;
	}

	.steps {
		display: flex;
		align-items: center;
		font-size: 26px;
		font-weight: 500;
		text-transform: uppercase;
	}
	.steps a {
		padding: 0 16px;
		line-height: 118px;
	}
	.steps a.active {
		box-shadow: inset 0 -4px #ef7a42, 0 2px #ef7a42;
		color: #ef7a42;
	}

	.chevron {
		margin: 4px 20px 0 16px;
	}

	.launch {
		display: flex;
		align-items: center;
		justify-content: flex-end;
		gap: 64px;
		padding: 2px 48px 0 0;
	}

	.relaunch {
		display: flex;
		align-items: center;
		gap: 18px;
		height: 80px;
		padding: 0 40px;
		border: 2px solid #ed7843;
		border-radius: 8px;
		background: linear-gradient(80deg, #ef7b45, #f1934f);
		color: #fff;
		font-size: 32px;
		font-weight: 500;
	}

	.subbar {
		display: flex;
		justify-content: space-between;
		height: 98px;
		background: #fff;
		border-bottom: 2px solid #e9e9e9;
	}

	.tabs {
		display: flex;
		padding-left: 92px;
		font-weight: 500;
		line-height: 98px;
		text-transform: uppercase;
	}
	.tabs a + a {
		margin-left: 48px;
	}
	.tabs a.active {
		box-shadow: inset 0 -6px #ef7a42;
		color: #ef7a42;
	}
	.tabs a.active + a {
		margin-left: 64px;
	}

	.tools {
		display: flex;
	}
	.tools > * {
		display: flex;
		align-items: center;
		border-left: 2px solid #d2d2d2;
	}

	.duration {
		gap: 26px;
		padding: 2px 34px 0 32px;
		text-align: left;
	}
	.duration strong,
	.duration small {
		display: block;
	}
	.duration strong {
		font-size: 32px;
		font-weight: 700;
		line-height: 38px;
	}
	.duration small {
		font-size: 26px;
		line-height: 34px;
	}

	.segment {
		gap: 18px;
		padding: 0 32px;
		color: #000;
		font-size: 32px;
	}

	.actions {
		gap: 72px;
		padding: 0 58px 0 54px;
	}

	main {
		padding: 0 260px 94px 256px;
		box-shadow: inset 8px 0 8px -6px rgba(0, 0, 0, 0.1);
	}

	.card {
		padding: 0 64px;
		background: #fff;
		box-shadow: 0 4px 8px rgba(90, 110, 140, 0.12);
	}

	.platforms {
		padding-bottom: 26px;
	}

	table {
		width: 100%;
		border-collapse: collapse;
		table-layout: fixed;
	}

	th,
	td {
		padding: 0 0 0 73px;
		text-align: left;
		vertical-align: top;
	}

	.num {
		width: 377px;
		padding-right: 73px;
		padding-left: 0;
		text-align: right;
	}
	.num.sent {
		width: 335px;
		padding-right: 115px;
		font-weight: 500;
	}

	.platforms th,
	.platforms td {
		height: 90px;
		font-weight: 500;
		vertical-align: middle;
	}
	.platforms th {
		padding-left: 82px;
	}

	.platform {
		display: flex;
		align-items: center;
		gap: 42px;
	}

	.section-head {
		display: flex;
		align-items: center;
		box-sizing: border-box;
		height: 170px;
		margin: 96px 0 16px;
		padding: 0 74px 0 50px;
		background: #f0f0f0;
	}

	.heading {
		flex: 1;
		padding: 2px 0 0 40px;
	}

	h2 {
		margin: 0;
		color: #000;
		font-size: 32px;
		font-weight: 400;
		line-height: 44px;
	}

	p {
		margin: 0;
		line-height: 46px;
	}

	.select {
		position: relative;
		width: 392px;
	}
	.select + .select {
		width: 400px;
		margin-left: 24px;
	}

	select {
		width: 100%;
		height: 70px;
		padding: 0 20px;
		border: 2px solid #d8d8d8;
		border-radius: 6px;
		background: #fff;
		color: inherit;
		font: inherit;
		appearance: none;
	}
	.open select {
		border-color: #ef7a42;
		box-shadow: 0 0 12px rgba(239, 122, 66, 0.5);
	}

	.caret {
		position: absolute;
		top: 29px;
		right: 24px;
	}

	.menu {
		position: absolute;
		top: 68px;
		left: 2px;
		right: 2px;
		padding: 8px 0;
		border: 2px solid #dcdcdc;
		border-radius: 6px;
		background: #fff;
		box-shadow: 0 2px 4px rgba(0, 0, 0, 0.15);
	}
	.menu button {
		display: flex;
		align-items: center;
		justify-content: space-between;
		width: 100%;
		height: 58px;
		padding: 0 16px 0 24px;
	}
	.menu .selected {
		background: #f4fff8;
		color: #45a05b;
	}
	.menu .selected::after {
		width: 16px;
		height: 16px;
		border-radius: 50%;
		background: #45a05b;
		content: '';
	}

	.countries {
		padding-bottom: 78px;
	}

	.chart {
		max-width: 1625px;
		margin: 0 auto;
		padding-right: 12px;
	}

	.map {
		width: 100%;
		height: auto;
	}
	.map path {
		fill: #f2f2f2;
		stroke: #b5b5b5;
		stroke-width: 2;
		stroke-linejoin: round;
	}
	.map .sea {
		fill: #fff;
	}
	.map .border {
		fill: none;
	}
	.map .hit {
		fill: #22587a;
		stroke: #3a6480;
		stroke-width: 1;
	}

	.scale {
		height: 21px;
		background: linear-gradient(90deg, #e3f4fe, #b3e2fb 25%, #64a7d2 50%, #4c82a7 65%, #22587a);
	}

	.ticks {
		position: relative;
		height: 47px;
		font-size: 20px;
		line-height: 26px;
	}
	.ticks span {
		position: absolute;
		transform: translateX(-50%);
	}

	thead {
		background: #f4f4f4;
		color: #5c5c5c;
		font-size: 24px;
		text-transform: uppercase;
	}
	thead th {
		height: 132px;
		font-weight: 500;
		vertical-align: middle;
	}

	.sort {
		display: inline-flex;
		align-items: center;
		gap: 18px;
		text-transform: inherit;
	}

	tbody td {
		padding-top: 32px;
	}
	.platforms td {
		padding-top: 0;
	}
	td b {
		display: block;
		margin-top: 2px;
		font-size: 32px;
		font-weight: 500;
		line-height: 42px;
	}
	td span {
		display: block;
		line-height: 48px;
	}

	.help {
		position: fixed;
		right: 64px;
		bottom: 62px;
		width: 96px;
		height: 96px;
		border: 2px solid #cfcfcf;
		border-radius: 50%;
		background: #e2e1df;
		box-shadow: 0 8px 24px rgba(0, 0, 0, 0.25);
		color: #5a5a5a;
		font-size: 36px;
		font-weight: 700;
	}
</style>
